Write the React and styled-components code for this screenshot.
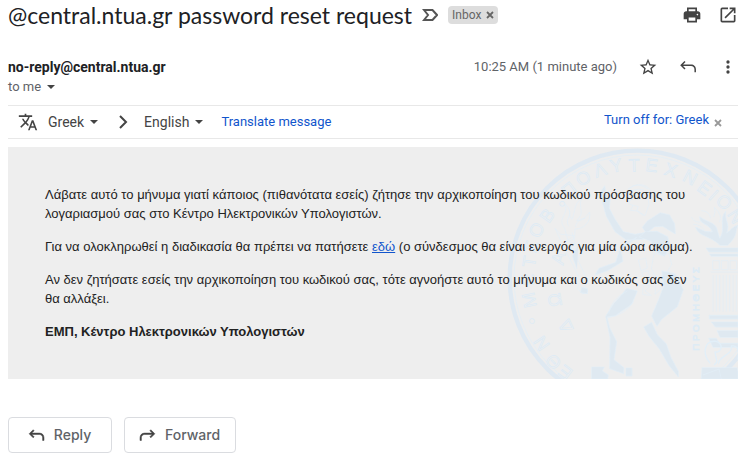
import React from "react";
import styled, { createGlobalStyle } from "styled-components";

const GlobalStyle = createGlobalStyle`
  * { box-sizing: border-box; }
  body { margin: 0; background: #fff; color: #202124; font-family: Roboto, sans-serif; }
  button { font-family: inherit; }
`;

const Page = styled.main`
  padding: 0 15px 8px 8px;
`;

const SubjectBar = styled.header`
  display: flex;
  align-items: center;
  height: 30px;
`;

const Subject = styled.h1`
  margin: 0 10px 0 0;
  font: 400 23px/30px Lato, sans-serif;
  white-space: nowrap;
`;

const Label = styled.span`
  display: flex;
  align-items: center;
  gap: 5px;
  height: 18px;
  margin-left: 10px;
  padding: 0 4px;
  border-radius: 4px;
  background: #ddd;
  color: #666;
  font-size: 12px;
  line-height: 18px;
`;

const IconButton = styled.button`
  display: flex;
  align-items: center;
  justify-content: center;
  flex: none;
  padding: 0;
  border: 0;
  background: none;
  color: ${(p) => p.$color || "#444"};
  cursor: pointer;
`;

const Actions = styled.div`
  display: flex;
  align-items: center;
  gap: ${(p) => p.$gap};
  margin-left: auto;
`;

const Sender = styled.section`
  display: flex;
  align-items: flex-start;
  height: 75px;
  padding-top: 27px;
`;

const SenderName = styled.h2`
  margin: 0;
  font-size: 14px;
  font-weight: 700;
  line-height: 20px;
`;

const Recipient = styled.button`
  display: flex;
  align-items: center;
  gap: 6px;
  padding: 0;
  border: 0;
  background: none;
  color: #5f6368;
  font-size: 13px;
  line-height: 20px;
`;

const Time = styled.time`
  color: #5f6368;
  font-size: 13px;
  line-height: 20px;
`;

const TranslateBar = styled.section`
  display: flex;
  align-items: center;
  height: 34px;
  padding: 0 16px 0 10px;
  border-top: 1px solid #e8e8e8;
  border-bottom: 1px solid #e8e8e8;
  color: #444;
`;

const Language = styled.button`
  display: flex;
  align-items: center;
  gap: 6px;
  margin-left: ${(p) => p.$space};
  padding: 0;
  border: 0;
  background: none;
  color: #444;
  font-size: 14px;
  line-height: 20px;
`;

const Chevron = styled.svg`
  margin-left: 21px;
`;

const TextLink = styled.a`
  margin-left: ${(p) => p.$space || "0"};
  color: #15c;
  font-size: 13px;
  line-height: 20px;
  text-decoration: none;
`;

const TurnOff = styled.div`
  display: flex;
  align-items: center;
  gap: 5px;
  margin-left: auto;
  padding-bottom: 4px;
`;

const Dismiss = styled(IconButton)`
  padding-top: 5px;
`;

const Message = styled.article`
  position: relative;
  overflow: hidden;
  margin-top: 8px;
  padding: 38px 37px;
  background: #eee;
  color: #222;
  font: 400 13px/19px "Liberation Sans", Arial, sans-serif;
`;

const Watermark = styled.svg`
  position: absolute;
  top: 0;
  right: 0;
  width: 238px;
  height: 232px;
`;

const Text = styled.div`
  position: relative;
`;

const Paragraph = styled.p`
  margin: 0 0 14px;
  font-weight: ${(p) => (p.$bold ? 700 : 400)};
  &:last-child { margin-bottom: 0; }
`;

const BodyLink = styled.a`
  color: #15c;
`;

const Footer = styled.footer`
  display: flex;
  gap: 12px;
  margin-top: 38px;
`;

const ReplyButton = styled.button`
  display: flex;
  align-items: center;
  justify-content: center;
  gap: 9px;
  height: 36px;
  padding: 0 15px 0 14px;
  min-width: 104px;
  border: 1px solid #dadce0;
  border-radius: 4px;
  background: #fff;
  color: #5f6368;
  font: 500 14px/20px Inter, sans-serif;
`;

const Caret = () => (
  <svg width="8" height="4" viewBox="0 0 8 4" aria-hidden="true"><path d="M0 0h8L4 4z" fill="#444" /></svg>
);

const Cross = () => (
  <svg width="8" height="8" viewBox="0 0 8 8" aria-hidden="true"><path d="M1 1l6 6M7 1L1 7" stroke="currentColor" strokeWidth="1.800" /></svg>
);

const Icon = ({ d, size = 20, flip, color = "currentColor", bold }) => (
  <svg width={size} height={size} viewBox="0 0 24 24" fill={color} fillRule="evenodd" stroke={bold ? color : "none"} strokeWidth="0.700" aria-hidden="true">
    <path d={d} transform={flip ? "matrix(-1 0 0 1 24 0)" : undefined} />
  </svg>
);

const PRINT = "M18 7.500V3H6v4.500H5c-1.660 0-3 1.340-3 3V17h4v4h12v-4h4v-6.500c0-1.660-1.340-3-3-3zM8 5h8v2.500H8zM8 15h8v4H8zM18.500 10.500a1 1 0 1 1 0 2 1 1 0 0 1 0-2z";
const OPEN = "M19 19H5V5h7V3H5a2 2 0 0 0-2 2v14a2 2 0 0 0 2 2h14a2 2 0 0 0 2-2v-7h-2v7zM14 3v2h3.590l-9.830 9.830 1.410 1.410L19 6.410V10h2V3h-7z";
const STAR = "M22 9.240l-7.190-.62L12 2 9.190 8.630 2 9.240l5.460 4.730L5.820 21 12 17.270 18.180 21l-1.630-7.030L22 9.240zM12 15.400l-3.760 2.270 1-4.280-3.320-2.880 4.380-.38L12 6.100l1.710 4.040 4.380.38-3.320 2.880 1 4.280L12 15.400z";
const REPLY = "M8.700 5.300L7.300 3.900 1.600 9.600l5.700 5.700 1.400-1.400-3.300-3.300H16c2.800 0 4.600 1.900 4.600 4.600V19h2v-3.800c0-3.900-2.700-6.600-6.600-6.600H5.400z";
const MORE = "M12 8a2 2 0 1 0 0-4 2 2 0 0 0 0 4zm0 2a2 2 0 1 0 0 4 2 2 0 0 0 0-4zm0 6a2 2 0 1 0 0 4 2 2 0 0 0 0-4z";
const TRANSLATE = "M12.870 15.070l-2.540-2.510.03-.03A17.520 17.520 0 0 0 14.070 6H17V4h-7V2H8v2H1v2h11.170C11.500 7.920 10.440 9.750 9 11.350 8.070 10.320 7.300 9.190 6.690 8h-2c.73 1.630 1.730 3.170 2.980 4.560l-5.090 5.020L4 19l5-5 3.110 3.110.76-2.040zM18.500 10h-2L12 22h2l1.120-3h4.750L21 22h2l-4.500-12zm-2.620 7l1.620-4.330L19.120 17h-3.240z";

/* Letters of the legend that runs round the seal: glyph, x, y. */
const legend = [
  ["Ε", 196, 682], ["Θ", 160, 650], ["Ν", 125, 595], ["•", 95, 528], ["Μ", 88, 465], ["Ε", 82, 405],
  ["Τ", 88, 350], ["Σ", 94, 304], ["Ο", 110, 255], ["Β", 142, 212], ["•", 186, 176], ["Π", 207, 134],
  ["Ο", 250, 100], ["Λ", 300, 75], ["Υ", 348, 62], ["Τ", 402, 62], ["Ε", 455, 62], ["Χ", 512, 76],
  ["Ν", 570, 98], ["Ε", 613, 130], ["Ι", 640, 151], ["Ο", 672, 172], ["Ν", 706, 214],
];

const Seal = () => (
  <Watermark viewBox="0 6 714 696" preserveAspectRatio="none" aria-hidden="true">
    <g fill="none" stroke="#dfe9f2">
      <circle cx="412" cy="400" r="383" strokeWidth="13" />
      <circle cx="412" cy="400" r="370" strokeWidth="2" stroke="#e1eef7" />
    </g>
    <g fill="#eee" stroke="#dcebf6" strokeWidth="2" fontFamily="Liberation Sans, sans-serif" fontSize="54" textAnchor="middle">
      {legend.map(([c, x, y], i) => (
        <text key={i} transform={`translate(${x} ${y}) rotate(${(Math.atan2(y - 400, x - 412) * 180) / Math.PI + 90})`} y="18">{c}</text>
      ))}
      <text transform="translate(165 465) rotate(-100)" y="18">Ω</text>
      <text transform="translate(197 543) rotate(-115)" y="18">Δ</text>
      <text transform="translate(175 340) rotate(-78)" y="18">Α</text>
      <text transform="translate(588 492) rotate(-90)" y="10" fontSize="29">Π Ρ Ο Μ Η Θ Ε Υ Σ</text>
    </g>
    <g fill="#dfe9f1" stroke="#e2eff8" strokeWidth="2" strokeLinejoin="round">
      <path d="M302 140l12-18 5 28 13 4-4 36 18 34 24 36 35 8 39-7-13 22-52 2-34-25-26-46-12-42z" />
      <path d="M378 148c9-30 52-40 72-14l8 22-15-4 4 26-12 34-22-14-22-2 8-14-15-8 12-12z" fill="none" />
      <path d="M384 132q28-24 60 0M388 142q30-20 58 2M394 152q24-14 46 2M397 180l18 5-5 12 20 15" fill="none" />
      <path d="M443 227l38-24 28 7 15 27 2 30-38-23-24 1-25 20-12-18z" />
      <path d="M418 276l18-16 35-1 32 16 8 31-18 28-32-18-8-27z" />
      <path d="M410 277l-47 38 6 34-46 28-38 13 12-20 50-18 15-48z" />
      <path d="M462 325l-8 46 14 25 26-2 21-36-8-32-21 4zM415 345l22-6 5 30-19 8zM425 382l20-5 5 25-14 10zM468 409l20-5-5 28-18 16zM430 416l19 8-14 14 19 13-26-2z" fill="none" />
      <path d="M485 377l41 9 24 48-18 51-48 39-13 20-16-31 22-52 14-38z" />
      <path d="M380 430l32 8-17 40-49 34-25 4 8 32 21 42-8 54 30 24-1 18-42-15 1-94-13-63 24-38 26-29z" />
      <path d="M326 505q8-44 56-67M322 519q55-10 79-50" fill="none" />
      <path d="M431 546l24-14 17 37 27 28 13 38 23 44 0 17-29-36-28-48-31-38z" />
      <path d="M275 666h38l-6 12 18 12-2 12h-48zM378 669h18v24h-18z" />
      <path d="M194 250c-25-32 15-40 0-75 27 26 7 38 22 48 12-29 4-42 28-63-9 34 12 42-14 67 20 2 30-15 39-26 5 30-19 52-44 51l-1 27-19 12z" fill="none" />
      <path d="M206 244c-12-22 8-26 2-48M226 246c6-22 20-26 30-26M216 262l10 34 14 20" fill="none" />
      <path d="M165 250l17 18 40 4-22 16 35 10-28 12 42 5-16 28 22 47-3 30 11 18-15 9-17-17 12-22-29-57-25-49z" fill="none" />
      <path d="M244 426l19 5-1 15-20-3zM235 296l-18 37 14 39M184 178l7 8" />
      <path d="M660 301c-30-30-66-26-73-55l28 13 22 2c-9-28-39-20-38-46 23 17 42 15 51 34l9 31c20-27-4-55 18-81-3 30 14 38 3 65 13-8 17-20 34-23-8 14-2 28-19 47l-12 13z" />
      <path d="M574 216q10 18 27 15M580 238q22 1 33 17M604 197q25 1 28 23M641 216q7-14 2-29 27 24 15 45" fill="none" />
      <path d="M618 309h96v12h-88zM628 327h86v7h-80z" />
      <path d="M638 347h20v27h-20zM664 347h20v27h-20zM690 347h20v27h-20z" fill="none" />
      <path d="M632 381h82M639 390v110M649 390v110M659 390v110M669 390v110M679 390v110M689 390v110M699 390v110M709 390v110" fill="none" />
      <path d="M628 511h86v11h-86zM634 531h80v15h-68zM651 557h63v20h-54zM626 580h23l9 15h56v12h-75z" />
      <path d="M631 655c-26-29-18-70 17-66 25 8 16 36-3 32 3 25 12 28-3 39M655 656c3-26 43-24 39-53 20-4 23 14 20 41" fill="none" strokeWidth="4" />
      <path d="M606 668h105l3 13v21H604z" />
      <path d="M609 690l48-18 7 30" fill="none" />
    </g>
  </Watermark>
);

export default function App() {
  return (
    <Page>
      <GlobalStyle />
      <SubjectBar>
        <Subject>@central.ntua.gr password reset request</Subject>
        <IconButton aria-label="Mark as important">
          <svg width="16" height="12" viewBox="0 0 16 12"><path d="M2 1h8.500L15 6l-4.500 5H2l4-5z" fill="none" stroke="#555" strokeWidth="2" /></svg>
        </IconButton>
        <Label>Inbox<IconButton aria-label="Remove label Inbox" $color="#666"><Cross /></IconButton></Label>
        <Actions $gap="16px">
          <IconButton aria-label="Print all"><Icon d={PRINT} /></IconButton>
          <IconButton aria-label="Open in new window"><Icon d={OPEN} /></IconButton>
        </Actions>
      </SubjectBar>
      <Sender>
        <div>
          <SenderName>no-reply@central.ntua.gr</SenderName>
          <Recipient>to me <Caret /></Recipient>
        </div>
        <Actions $gap="21px">
          <Time>10:25 AM (1 minute ago)</Time>
          <IconButton aria-label="Star"><Icon d={STAR} /></IconButton>
          <IconButton aria-label="Reply to sender"><Icon d={REPLY} size={18} /></IconButton>
          <IconButton aria-label="More"><Icon d={MORE} /></IconButton>
        </Actions>
      </Sender>
      <TranslateBar>
        <Icon d={TRANSLATE} />
        <Language $space="10px">Greek <Caret /></Language>
        <Chevron width="9" height="14" viewBox="0 0 9 14" aria-hidden="true"><path d="M1 1l6 6-6 6" fill="none" stroke="#444" strokeWidth="2" /></Chevron>
        <Language $space="16px">English <Caret /></Language>
        <TextLink href="#translate" $space="18px">Translate message</TextLink>
        <TurnOff>
          <TextLink href="#turn-off">Turn off for: Greek</TextLink>
          <Dismiss aria-label="Dismiss" $color="#999"><Cross /></Dismiss>
        </TurnOff>
      </TranslateBar>
      <Message lang="el">
        <Seal />
        <Text>
          <Paragraph>Λάβατε αυτό το μήνυμα γιατί κάποιος (πιθανότατα εσείς) ζήτησε την αρχικοποίηση του κωδικού πρόσβασης του λογαριασμού σας στο Κέντρο Ηλεκτρονικών Υπολογιστών.</Paragraph>
          <Paragraph>Για να ολοκληρωθεί η διαδικασία θα πρέπει να πατήσετε <BodyLink href="#reset">εδώ</BodyLink> (ο σύνδεσμος θα είναι ενεργός για μία ώρα ακόμα).</Paragraph>
          <Paragraph>Αν δεν ζητήσατε εσείς την αρχικοποίηση του κωδικού σας, τότε αγνοήστε αυτό το μήνυμα και ο κωδικός σας δεν θα αλλάξει.</Paragraph>
          <Paragraph $bold>ΕΜΠ, Κέντρο Ηλεκτρονικών Υπολογιστών</Paragraph>
        </Text>
      </Message>
      <Footer>
        <ReplyButton><Icon d={REPLY} size={17} color="#444" bold />Reply</ReplyButton>
        <ReplyButton><Icon d={REPLY} size={17} color="#444" bold flip />Forward</ReplyButton>
      </Footer>
    </Page>
  );
}
